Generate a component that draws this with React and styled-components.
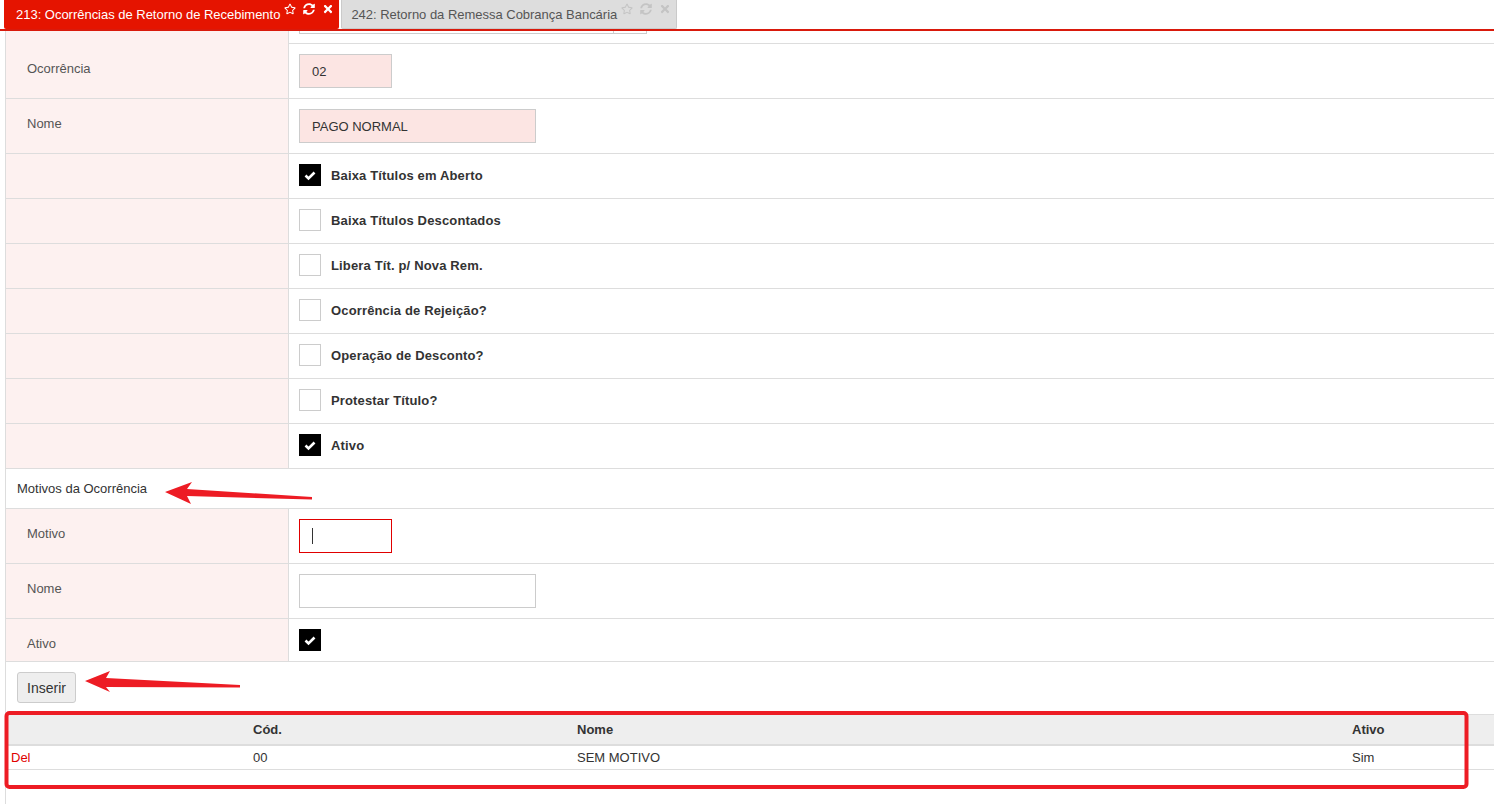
import React from "react"
import styled, { createGlobalStyle } from "styled-components"
import { FaRegStar, FaSyncAlt, FaTimes } from "react-icons/fa"

const GlobalStyle = createGlobalStyle`
  html, body {
    margin: 0;
    padding: 0;
    background: #fff;
  }
  body {
    font-family: "Liberation Sans", Arial, sans-serif;
    font-size: 13px;
    color: #333;
  }
  * { box-sizing: border-box; }
`

const Page = styled.div`
  position: relative;
  width: 1494px;
  min-height: 804px;
  overflow: hidden;
`

const TabBar = styled.div`
  display: flex;
  gap: 2px;
  height: 31px;
  padding-left: 4px;
  border-bottom: 2px solid #d91a0c;
`

const Tab = styled.div`
  display: flex;
  height: 29px;
  padding: 0 5px 0 ${p => (p.$active ? "12px" : "9px")};
  background: ${p => (p.$active ? "#e51400" : "#dddddd")};
  color: ${p => (p.$active ? "#fff" : "#555")};
  border: ${p => (p.$active ? "none" : "1px solid #cacaca")};
  border-top: none;
  border-radius: 0 0 2px 2px;
`

const TabTitle = styled.span`
  font-size: 13px;
  line-height: 29px;
  white-space: nowrap;
  letter-spacing: -0.02px;
`

const TabIcons = styled.div`
  display: flex;
  gap: 7px;
  padding: 3px 0 0 4px;
  font-size: 12px;
  color: ${p => (p.$active ? "#fff" : "#c4c4c4")};
  svg { display: block; }
`

const Content = styled.div`
  margin-left: 5px;
  border-left: 1px solid #dddddd;
  min-height: 773px;
`

const FormRow = styled.div`
  display: grid;
  grid-template-columns: 283px 1fr;
  height: ${p => p.$h}px;
  border-bottom: 1px solid #dddddd;
`

const LabelCell = styled.div`
  background: #fdf1f0;
  border-right: 1px solid #dddddd;
  padding: 17px 0 0 21px;
  font-size: 13px;
  line-height: 16px;
  color: #555;
`

const ValueCell = styled.div`
  display: flex;
  align-items: flex-start;
  padding: ${p => p.$pt ?? 10}px 0 0 10px;
`

const Remnant = styled.div`
  display: flex;
  width: 348px;
  height: 3px;
  border: 1px solid #cccccc;
  border-top: none;
  div:last-child {
    width: 33px;
    border-left: 1px solid #cccccc;
  }
  div:first-child { flex: 1; }
`

const TextInput = styled.input`
  width: ${p => p.$w}px;
  height: 34px;
  padding: 0 12px;
  border: 1px solid ${p => (p.$focus ? "#e00000" : "#cccccc")};
  background: ${p => (p.$filled ? "#fce5e3" : "#fff")};
  font-family: "Liberation Sans", Arial, sans-serif;
  font-size: 13px;
  color: #333;
  outline: none;
`

const FieldWrap = styled.div`
  position: relative;
`

const Caret = styled.span`
  position: absolute;
  left: 13px;
  top: 9px;
  width: 1px;
  height: 16px;
  background: #333;
`

const CheckLine = styled.label`
  display: flex;
  align-items: center;
  gap: 10px;
  font-weight: bold;
  font-size: 13px;
  letter-spacing: 0.15px;
  color: #333;
`

const Box = styled.span`
  display: flex;
  align-items: center;
  justify-content: center;
  width: 22px;
  height: 22px;
  background: ${p => (p.$checked ? "#000" : "#fff")};
  border: ${p => (p.$checked ? "none" : "1px solid #cccccc")};
`

const SectionHeader = styled.div`
  display: flex;
  align-items: center;
  height: 40px;
  padding-left: 11px;
  border-bottom: 1px solid #dddddd;
  font-size: 13px;
  color: #333;
`

const ButtonRow = styled.div`
  height: 52px;
  padding: 10px 0 0 11px;
`

const Button = styled.button`
  width: 59px;
  height: 31px;
  background: #eeeeee;
  border: 1px solid #cccccc;
  border-radius: 3px;
  font-family: "Liberation Sans", Arial, sans-serif;
  font-size: 14px;
  color: #333;
  padding: 0;
`

const Grid = styled.table`
  width: 100%;
  border-collapse: collapse;
  table-layout: fixed;
  font-size: 13px;
`

const Th = styled.th`
  height: 30px;
  padding: 0 5px;
  text-align: left;
  background: #eeeeee;
  border-top: 1px solid #dddddd;
  border-bottom: 2px solid #dddddd;
  color: #333;
  font-weight: bold;
`

const Td = styled.td`
  height: 25px;
  padding: 0 5px;
  border-bottom: 1px solid #dddddd;
  color: ${p => (p.$danger ? "#e00000" : "#333")};
`

const Overlay = styled.svg`
  position: absolute;
  left: 0;
  top: 0;
  pointer-events: none;
`

const Check = () => (
  <svg width="22" height="22" viewBox="0 0 22 22">
    <polyline points="6.5,11.5 9.5,14.5 15.5,8.5" fill="none" stroke="#fff" strokeWidth="2.6" />
  </svg>
)

const CheckField = ({ checked, label }) => (
  <CheckLine>
    <Box $checked={checked}>{checked && <Check />}</Box>
    {label}
  </CheckLine>
)

const TabItem = ({ active, title }) => (
  <Tab $active={active}>
    <TabTitle>{title}</TabTitle>
    <TabIcons $active={active}>
      <FaRegStar />
      <FaSyncAlt />
      <FaTimes />
    </TabIcons>
  </Tab>
)

const flags = [
  ["Baixa Títulos em Aberto", true],
  ["Baixa Títulos Descontados", false],
  ["Libera Tít. p/ Nova Rem.", false],
  ["Ocorrência de Rejeição?", false],
  ["Operação de Desconto?", false],
  ["Protestar Título?", false],
  ["Ativo", true],
]

const motivos = [{ cod: "00", nome: "SEM MOTIVO", ativo: "Sim" }]

export default function App() {
  return (
    <Page>
      <GlobalStyle />
      <TabBar>
        <TabItem active title="213: Ocorrências de Retorno de Recebimento" />
        <TabItem title="242: Retorno da Remessa Cobrança Bancária" />
      </TabBar>

      <Content>
        <FormRow $h={13}>
          <LabelCell />
          <ValueCell $pt={0}>
            <Remnant><div /><div /></Remnant>
          </ValueCell>
        </FormRow>

        <FormRow $h={55}>
          <LabelCell>Ocorrência</LabelCell>
          <ValueCell><TextInput $w={93} $filled defaultValue="02" /></ValueCell>
        </FormRow>
        <FormRow $h={55}>
          <LabelCell>Nome</LabelCell>
          <ValueCell><TextInput $w={237} $filled defaultValue="PAGO NORMAL" /></ValueCell>
        </FormRow>

        {flags.map(([label, checked]) => (
          <FormRow $h={45} key={label}>
            <LabelCell />
            <ValueCell><CheckField checked={checked} label={label} /></ValueCell>
          </FormRow>
        ))}

        <SectionHeader>Motivos da Ocorrência</SectionHeader>

        <FormRow $h={55}>
          <LabelCell>Motivo</LabelCell>
          <ValueCell>
            <FieldWrap>
              <TextInput $w={93} $focus />
              <Caret />
            </FieldWrap>
          </ValueCell>
        </FormRow>
        <FormRow $h={55}>
          <LabelCell>Nome</LabelCell>
          <ValueCell><TextInput $w={237} /></ValueCell>
        </FormRow>
        <FormRow $h={43}>
          <LabelCell>Ativo</LabelCell>
          <ValueCell><CheckField checked /></ValueCell>
        </FormRow>

        <ButtonRow>
          <Button>Inserir</Button>
        </ButtonRow>

        <Grid>
          <colgroup>
            <col style={{ width: 242 }} />
            <col style={{ width: 324 }} />
            <col style={{ width: 775 }} />
            <col />
          </colgroup>
          <thead>
            <tr>
              <Th />
              <Th>Cód.</Th>
              <Th>Nome</Th>
              <Th>Ativo</Th>
            </tr>
          </thead>
          <tbody>
            {motivos.map(m => (
              <tr key={m.cod}>
                <Td $danger>Del</Td>
                <Td>{m.cod}</Td>
                <Td>{m.nome}</Td>
                <Td>{m.ativo}</Td>
              </tr>
            ))}
          </tbody>
        </Grid>
      </Content>

      {/* annotations drawn over the screenshot */}
      <Overlay width="1494" height="804" viewBox="0 0 1494 804">
        <polygon fill="#ed1c24" points="165,492 192,482 187,489 312,497 312,499.5 187,496 191,504" />
        <polygon fill="#ed1c24" points="85,681 110,671 106,678 240,685 240,687.5 106,687 110,692" />
        <rect x="6.5" y="713" width="1460" height="74" rx="3" fill="none" stroke="#ed1c24" strokeWidth="4" />
      </Overlay>
    </Page>
  )
}
